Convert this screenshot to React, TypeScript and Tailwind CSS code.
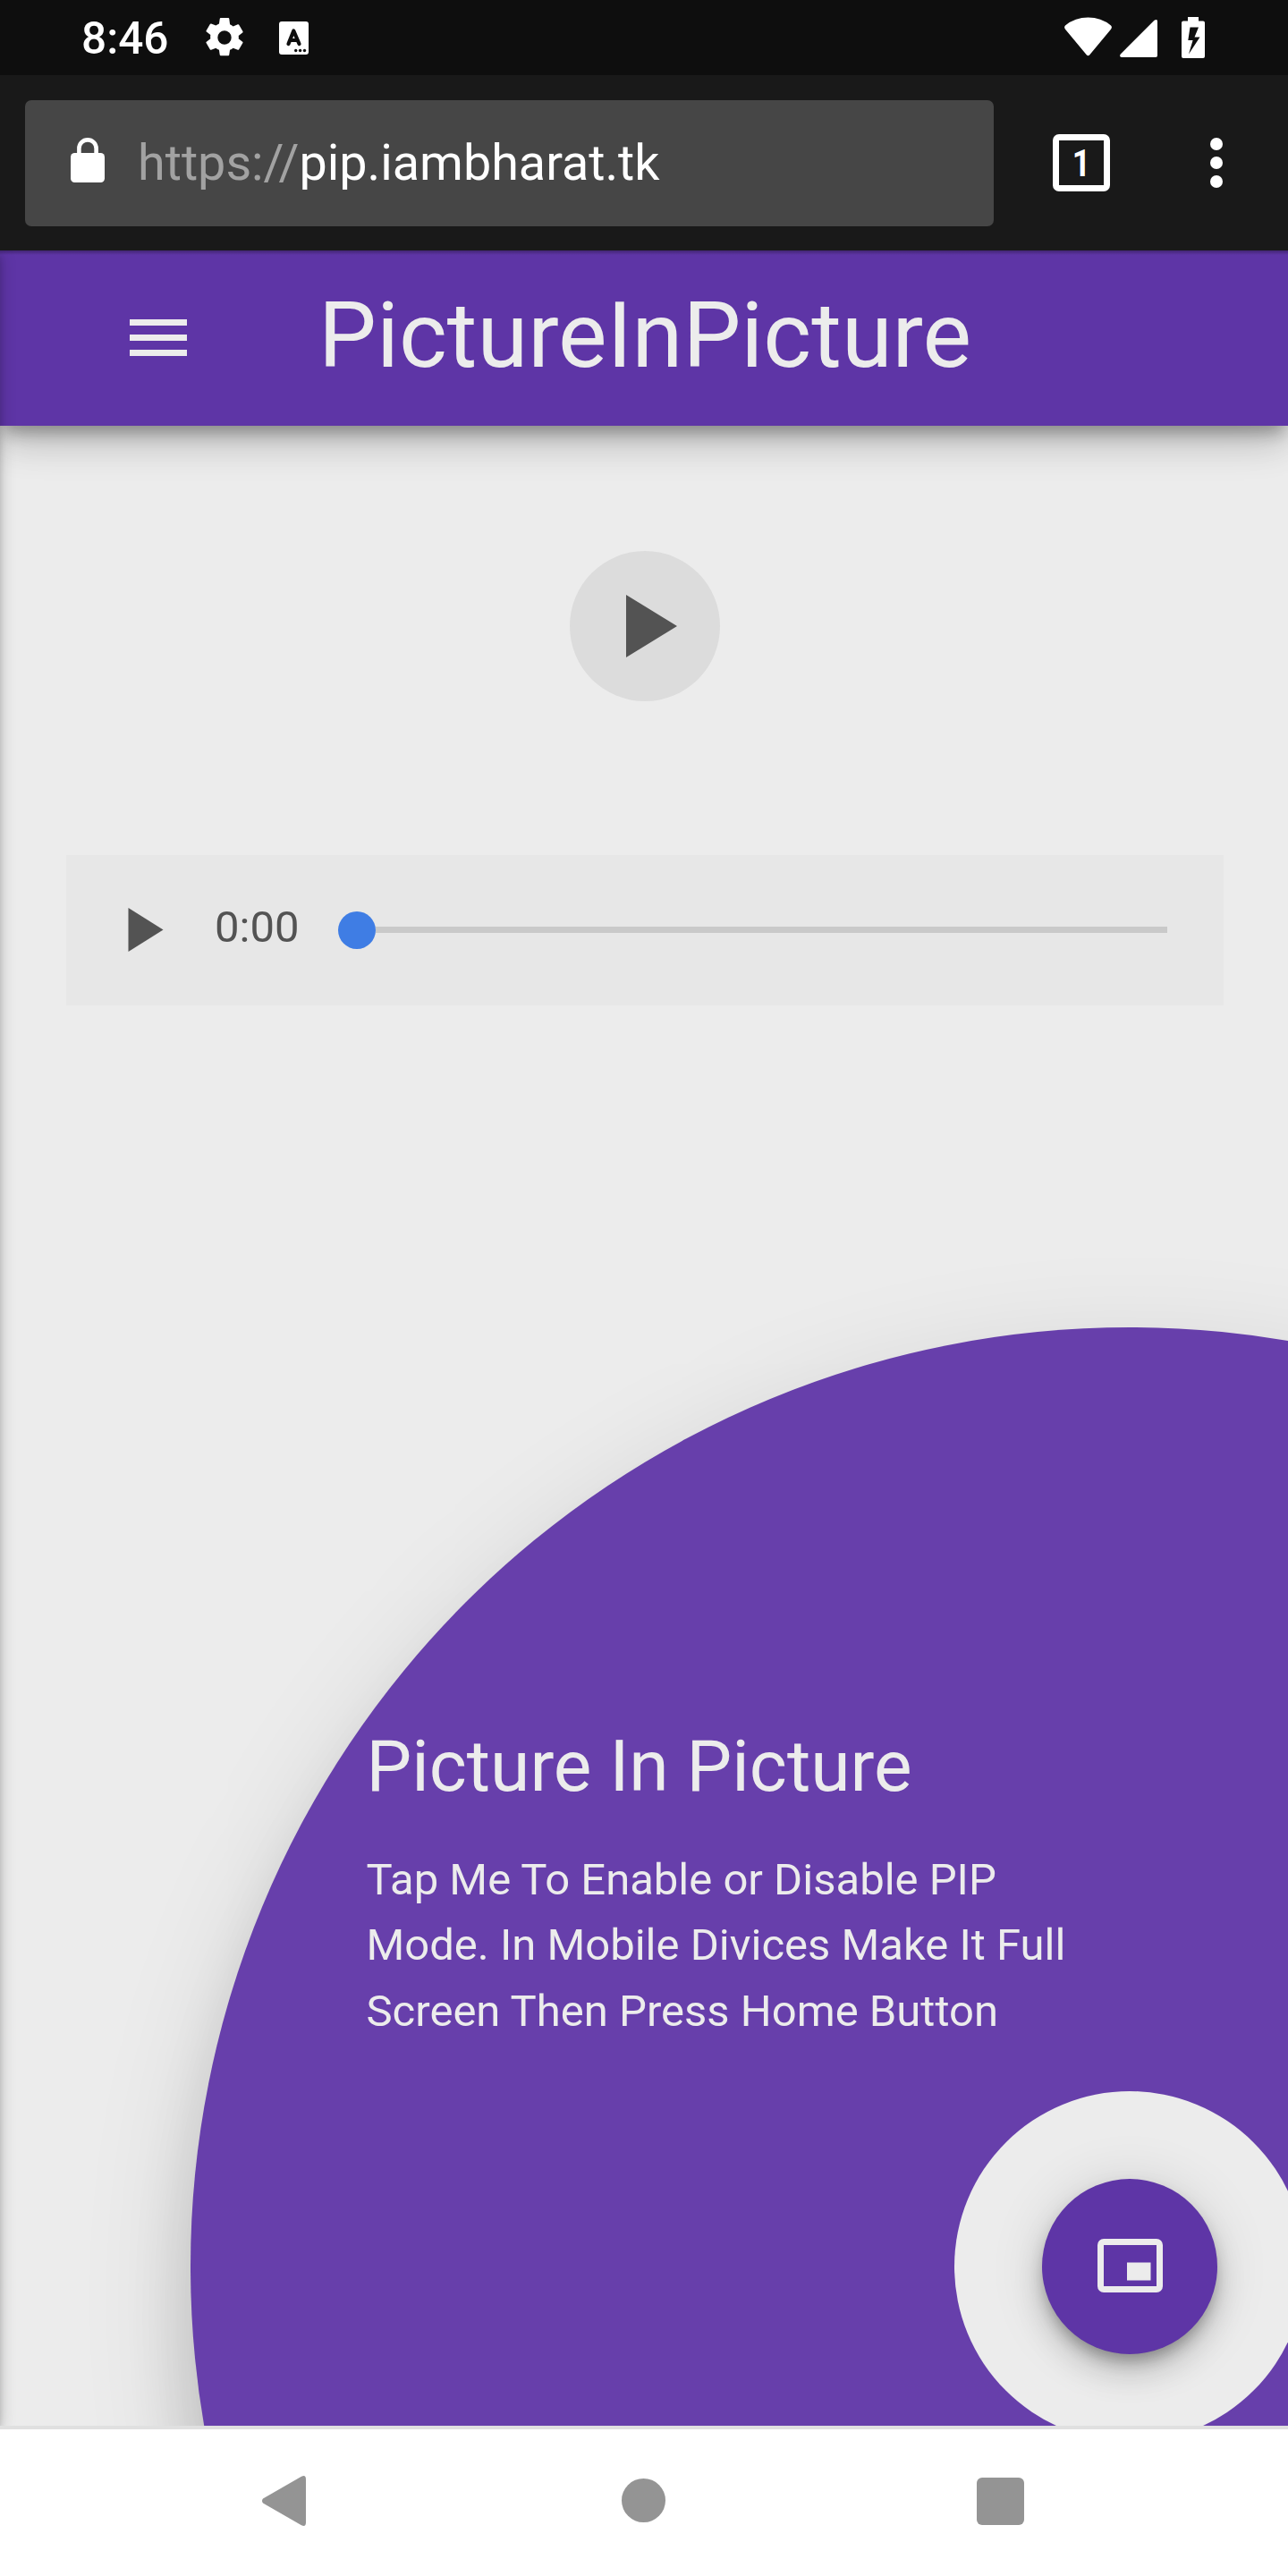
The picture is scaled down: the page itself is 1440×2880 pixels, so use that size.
import React from "react";

function StatusBar() {
  return (
    <div className="flex h-[84px] shrink-0 items-center bg-[#0e0e0e] pl-[91px] text-white">
      <span className="w-[138px] pt-[3px] text-[49.500px] leading-[81px] font-medium">8:46</span>
      <svg className="-mt-px size-[44px]" viewBox="2.2 2 19.6 20" fill="currentColor">
        <path fillRule="evenodd" d="M19.14 12.94c.04-.3.06-.61.06-.94 0-.32-.02-.64-.07-.94l2.03-1.58a.49.49 0 0 0 .12-.61l-1.92-3.32a.488.488 0 0 0-.59-.22l-2.39.96c-.5-.38-1.03-.7-1.62-.94L14.4 2.41a.484.484 0 0 0-.48-.41h-3.84c-.24 0-.43.17-.47.41l-.36 2.54c-.59.24-1.13.57-1.62.94l-2.39-.96c-.22-.08-.47 0-.59.22L2.74 8.47c-.12.21-.08.47.12.61l2.03 1.58c-.05.3-.09.63-.09.94s.02.64.07.94l-2.03 1.58a.49.49 0 0 0-.12.61l1.92 3.32c.12.22.37.29.59.22l2.39-.96c.5.38 1.03.7 1.62.94l.36 2.54c.05.24.24.41.48.41h3.84c.24 0 .44-.17.47-.41l.36-2.54c.59-.24 1.13-.56 1.62-.94l2.39.96c.22.08.47 0 .59-.22l1.92-3.32c.12-.22.07-.47-.12-.61l-2.01-1.58zM12 15.500a3.500 3.500 0 1 1 0-7 3.500 3.500 0 0 1 0 7z" />
      </svg>
      <svg className="ml-[39px] h-[37px] w-[33px]" viewBox="0 0 33 37">
        <rect width="33" height="37" rx="3" fill="#fff" />
        <path d="M10.500 25 L16.300 10.500 L22.500 25 M12.500 21 H20.500" fill="none" stroke="#0e0e0e" strokeWidth="4.200" strokeLinecap="round" strokeLinejoin="round" />
        <circle cx="18.700" cy="32.500" r="1.700" fill="#0e0e0e" />
        <circle cx="23.600" cy="32.500" r="1.700" fill="#0e0e0e" />
        <circle cx="28.500" cy="32.500" r="1.700" fill="#0e0e0e" />
      </svg>
      <svg className="ml-[845px] h-[46px] w-[158px]" viewBox="0 0 158 46" fill="#fff">
        <path d="M1 9.500 Q-.8 11.500 1 13.800 L24.500 42 Q26.500 44.500 28.500 42 L52 13.800 Q53.800 11.500 52 9.500 Q41 .6 26.500 .6 Q12 .6 1 9.500Z" />
        <path d="M62.800 41.500 L100.500 3.800 Q104 1.500 104 5 V43 Q104 45 102 45 H64 Q61 44.500 62.800 41.500Z" />
        <path fillRule="evenodd" d="M138 0 h12 v4.500 h5 a2 2 0 0 1 2 2 V44 a2 2 0 0 1 -2 2 h-22 a2 2 0 0 1 -2 -2 V6.500 a2 2 0 0 1 2 -2 h5z M140.500 11.500 L138.300 26 H143.600 L139 41.500 L151.500 22.500 H145.500 L150 11.500z" />
      </svg>
    </div>
  );
}

function BrowserBar() {
  return (
    <div className="flex h-[196px] shrink-0 items-center bg-[#191919] pl-[28px] text-white">
      <div className="flex h-[141px] w-[1083px] items-center rounded-[7px] bg-[#464646] pl-[51px]">
        <svg className="-mt-[7px] h-[50px] w-[38px]" viewBox="0 0 38 50">
          <path d="M9.400 20 V12 a9.600 9.600 0 0 1 19.200 0 V20" fill="none" stroke="#fff" strokeWidth="4.600" />
          <rect y="17" width="38" height="33" rx="4.500" fill="#fff" />
        </svg>
        <div className="ml-[37px] text-[55.700px] leading-[80px] whitespace-nowrap">
          <span className="text-[#a2a2a2]">https://</span>
          <span>pip.iambharat.tk</span>
        </div>
      </div>
      <div className="ml-[66px] flex size-[64px] items-center justify-center rounded-[7px] border-[7px] border-white text-[42px] font-bold">
        <span className="block scale-x-[0.85]">1</span>
      </div>
      <div className="ml-[112px] flex flex-col gap-[7px]">
        <i className="size-[14px] rounded-full bg-white" />
        <i className="size-[14px] rounded-full bg-white" />
        <i className="size-[14px] rounded-full bg-white" />
      </div>
    </div>
  );
}

function AppHeader() {
  return (
    <header className="flex h-[196px] shrink-0 items-center bg-[#5e35a6] text-[#ececec] shadow-[0_21px_35px_0_rgba(0,0,0,0.14),0_3.5px_63px_0_rgba(0,0,0,0.12),0_10.5px_17.5px_-3.5px_rgba(0,0,0,0.3)]">
      <div className="-mt-px ml-[145px] flex w-[64px] flex-col gap-[10px]">
        <i className="h-[7px] bg-[#ececec]" />
        <i className="h-[7px] bg-[#ececec]" />
        <i className="h-[7px] bg-[#ececec]" />
      </div>
      <h1 className="-mt-[6px] ml-[147px] text-[102.900px] leading-[190px] whitespace-nowrap">PictureInPicture</h1>
    </header>
  );
}

function AudioPlayer() {
  return (
    <div className="mt-[171.500px] mr-[72px] ml-[73.500px] flex h-[168px] items-center bg-[#e7e7e7]">
      <svg className="ml-[69.500px] h-[49px] w-[40px]" viewBox="0 0 40 49">
        <path d="M.5 0 L39.500 24.500 L.5 49Z" fill="#535353" />
      </svg>
      <span className="ml-[57px] w-[138px] pb-[5px] text-[49px] leading-[60px] text-[#535353]">0:00</span>
      <i className="size-[42px] rounded-full bg-[#3f7de4]" />
      <i className="h-[7px] w-[885px] bg-[#c9c9c9]" />
    </div>
  );
}

function TapTarget() {
  return (
    <div className="absolute top-[1204px] left-[213px] size-[2100px] rounded-full bg-[#673fab] text-[#ececec] shadow-[0_70px_70px_0_rgba(0,0,0,0.14),0_35px_130px_0_rgba(0,0,0,0.12),0_105px_35px_-70px_rgba(0,0,0,0.2)]">
      <div className="pt-[443px] pl-[196.500px]">
        <h2 className="text-[80.360px] leading-[96px]">Picture In Picture</h2>
        <p className="mt-[41.500px] text-[49px] leading-[73.500px] whitespace-nowrap">
          Tap Me To Enable or Disable PIP
          <br />
          Mode. In Mobile Divices Make It Full
          <br />
          Screen Then Press Home Button
        </p>
      </div>
      <div className="absolute top-[854px] left-[854px] flex size-[392px] items-center justify-center rounded-full bg-[#ececec]">
        <button className="flex size-[196px] items-center justify-center rounded-full bg-[#5e35a6] shadow-[0_21px_35px_0_rgba(0,0,0,0.14),0_3.5px_63px_0_rgba(0,0,0,0.12),0_10.5px_17.5px_-3.5px_rgba(0,0,0,0.3)]">
          <svg className="-mt-[2px] h-[60px] w-[73px]" viewBox="0 0 73 60">
            <rect x="3.500" y="3.500" width="66" height="53" rx="3.500" fill="none" stroke="#ececec" strokeWidth="7" />
            <rect x="33" y="26.500" width="26.500" height="20" fill="#ececec" />
          </svg>
        </button>
      </div>
    </div>
  );
}

function NavigationBar() {
  return (
    <nav className="flex h-[168px] shrink-0 items-center border-t-4 border-[#e0e0e0] bg-white pb-[4px] pl-[293px]">
      <svg className="h-[56px] w-[49px]" viewBox="0 0 49 56" fill="#949494">
        <path d="M44 .8 Q49 -1.500 49 4 V52 Q49 57.500 44 55.200 L1 30.500 Q-1 28 1 25.500Z" />
      </svg>
      <i className="-mt-px ml-[353px] size-[49px] rounded-full bg-[#949494]" />
      <i className="ml-[347.500px] size-[53px] rounded-[6px] bg-[#949494]" />
    </nav>
  );
}

export default function App() {
  return (
    <div className="flex h-[2880px] w-[1440px] flex-col overflow-hidden bg-white font-['Roboto',sans-serif]">
      <StatusBar />
      <BrowserBar />
      <main className="relative flex h-[2432px] shrink-0 flex-col overflow-hidden bg-[#ececec]">
        <AppHeader />
        <div className="mt-[140px] ml-[637px] flex size-[168px] shrink-0 items-center justify-center rounded-full bg-[#dcdcdc] pl-[15px]">
          <svg className="h-[70px] w-[57px]" viewBox="0 0 57 70">
            <path d="M0 0 L57 35 L0 70Z" fill="#535353" />
          </svg>
        </div>
        <AudioPlayer />
        <TapTarget />
        {/* Shadows cast by the closed side drawer and the browser toolbar */}
        <div className="absolute top-0 -left-[100px] h-full w-[100px] shadow-[0_7px_7px_0_rgba(0,0,0,0.14),0_10.5px_3.5px_-7px_rgba(0,0,0,0.12),0_3.5px_17.5px_0_rgba(0,0,0,0.2)]" />
        <div className="absolute inset-x-0 top-0 h-[5px] bg-linear-to-b from-black/30 to-transparent" />
      </main>
      <NavigationBar />
    </div>
  );
}
